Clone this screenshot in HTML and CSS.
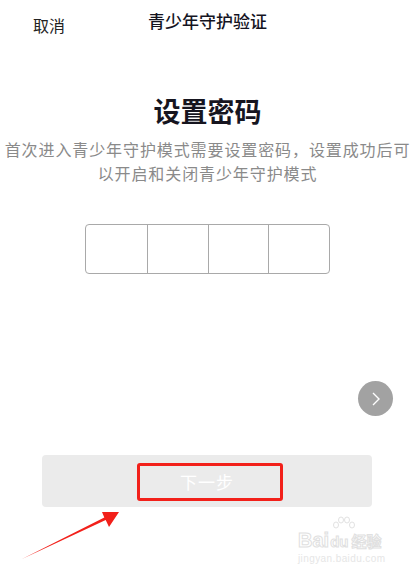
FILE: index.html
```html
<!DOCTYPE html>
<html lang="zh-CN">
<head>
    <meta charset="UTF-8">
    <title>青少年守护验证</title>
    <link rel="stylesheet" href="styles.css">
</head>
<body>
    <div class="page">
        <div class="nav">
            <span class="cancel">取消</span>
            <span class="nav-title">青少年守护验证</span>
            <span></span>
        </div>

        <h1 class="heading">设置密码</h1>
        <p class="desc">首次进入青少年守护模式需要设置密码，设置成功后可<br>以开启和关闭青少年守护模式</p>

        <div class="code-boxes">
            <div class="cell"></div>
            <div class="cell"></div>
            <div class="cell"></div>
            <div class="cell"></div>
        </div>

        <div class="next-row">
            <div class="circle-btn">
                <svg width="12" height="16" viewBox="0 0 12 16">
                    <polyline points="3,2 9,8 3,14" fill="none" stroke="#fff" stroke-width="1.4"/>
                </svg>
            </div>
        </div>

        <button class="submit" type="button">下一步</button>

        <!-- 标注 -->
        <div class="mark-box"></div>
        <svg class="mark-arrow" width="130" height="70" viewBox="0 0 130 70">
            <polygon points="119,12 102,12 104.3,17.4 22,59 105.7,20.1 109,27" fill="#f2201a"/>
        </svg>

        <div class="watermark">
            <svg class="wm-paw" width="26" height="14" viewBox="0 0 26 14">
                <g fill="#fff" stroke="#e2e2e2" stroke-width="1">
                    <ellipse cx="6" cy="9" rx="2.5" ry="3"/>
                    <ellipse cx="11" cy="4" rx="2.5" ry="3"/>
                    <ellipse cx="17" cy="4" rx="2.5" ry="3"/>
                    <ellipse cx="22" cy="9" rx="2.5" ry="3"/>
                </g>
            </svg>
            <div class="wm-logo">Bai<span class="wm-du">du</span><span class="wm-cn">经验</span></div>
            <div class="wm-url">jingyan.baidu.com</div>
        </div>
    </div>
</body>
</html>
```

FILE: styles.css
```css
body {
    margin: 0;
    background-color: #fff;
    font-family: "Noto Sans CJK SC", "Noto Sans", sans-serif;
}

.page {
    position: relative;
    width: 415px;
    height: 574px;
    overflow: hidden;
}

.nav {
    display: grid;
    grid-template-columns: 1fr auto 1fr;
    align-items: start;
    height: 60px;
}

.cancel {
    padding-left: 33px;
    margin-top: 15px;
    font-size: 16px;
    line-height: 20px;
    color: #222;
}

.nav-title {
    margin-top: 11px;
    font-size: 17px;
    line-height: 20px;
    font-weight: 500;
    color: #15141f;
}

.heading {
    margin: 34px 0 0;
    text-align: center;
    font-size: 27px;
    line-height: 34px;
    font-weight: 700;
    color: #16151f;
}

.desc {
    margin: 9px 0 0;
    text-align: center;
    font-size: 16px;
    line-height: 24px;
    letter-spacing: 0.9px;
    color: #8a8a8a;
}

.code-boxes {
    display: grid;
    grid-template-columns: repeat(4, 1fr);
    width: 245px;
    height: 50px;
    margin: 39px auto 0;
    border: 1px solid #a9a9a9;
    border-radius: 4px;
    box-sizing: border-box;
}

.cell {
    border-left: 1px solid #a9a9a9;
}

.cell:first-child {
    border-left: none;
}

.next-row {
    display: flex;
    justify-content: flex-end;
    padding-right: 22px;
    margin-top: 107px;
}

.circle-btn {
    display: flex;
    align-items: center;
    justify-content: center;
    width: 35px;
    height: 35px;
    border-radius: 50%;
    background-color: #a2a2a2;
}

.submit {
    display: block;
    width: 330px;
    height: 52px;
    margin: 39px 0 0 42px;
    border: none;
    border-radius: 4px;
    background-color: #ebebeb;
    color: #fff;
    font-family: inherit;
    font-size: 17px;
    letter-spacing: 1px;
}

.mark-box {
    position: absolute;
    left: 137px;
    top: 463px;
    width: 146px;
    height: 38px;
    border: 3px solid #f2201a;
    border-radius: 3px;
    box-sizing: border-box;
}

.mark-arrow {
    position: absolute;
    left: 0;
    top: 500px;
}

.watermark {
    position: absolute;
    left: 298px;
    top: 516px;
    color: #fff;
    -webkit-text-stroke: 1px #e0e0e0;
    font-family: "Liberation Sans", sans-serif;
}

.wm-paw {
    display: block;
    margin-left: 32px;
}

.wm-logo {
    font-size: 20px;
    font-weight: 700;
    line-height: 20px;
}

.wm-du {
    font-size: 15px;
    margin-left: 1px;
}

.wm-cn {
    font-family: "Noto Sans CJK SC", sans-serif;
    font-size: 15px;
    margin-left: 3px;
}

.wm-url {
    font-size: 10px;
    line-height: 14px;
    letter-spacing: 0.4px;
    -webkit-text-stroke: 0;
    color: #e6e6e6;
}
```
